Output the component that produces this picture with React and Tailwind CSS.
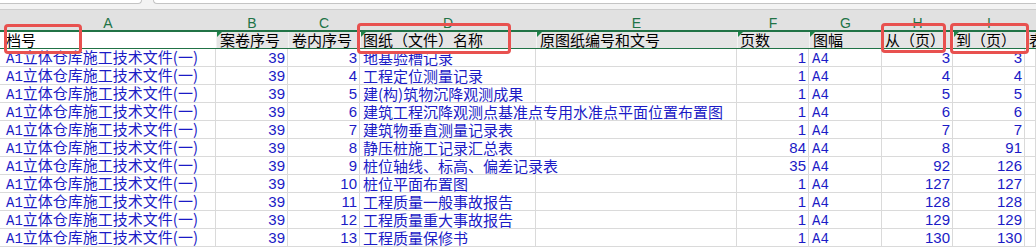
const cn = '"Noto Sans CJK SC", "Liberation Sans", sans-serif';

const letters = ["A", "B", "C", "D", "E", "F", "G", "H", "I", ""];

const headers = [
  { t: "档号", pad: "pl-[6px]", mark: false, active: true },
  { t: "案卷序号", pad: "pl-[3px]", mark: true },
  { t: "卷内序号", pad: "pl-[3px]", mark: false },
  { t: "图纸（文件）名称", pad: "pl-[2px]", mark: true },
  { t: "原图纸编号和文号", pad: "pl-[3px]", mark: true },
  { t: "页数", pad: "pl-[2px]", mark: true },
  { t: "图幅", pad: "pl-[3px]", mark: true },
  { t: "从（页）", pad: "pl-[2px]", mark: false },
  { t: "到（页）", pad: "pl-[2px]", mark: true },
  { t: "表", pad: "pl-[3px]", mark: false },
];

const rows = [
  [3, "地基验槽记录", 1, 3, 3],
  [4, "工程定位测量记录", 1, 4, 4],
  [5, "建(构)筑物沉降观测成果", 1, 5, 5],
  [6, "建筑工程沉降观测点基准点专用水准点平面位置布置图", 1, 6, 6],
  [7, "建筑物垂直测量记录表", 1, 7, 7],
  [8, "静压桩施工记录汇总表", 84, 8, 91],
  [9, "桩位轴线、标高、偏差记录表", 35, 92, 126],
  [10, "桩位平面布置图", 1, 127, 127],
  [11, "工程质量一般事故报告", 1, 128, 128],
  [12, "工程质量重大事故报告", 1, 129, 129],
  [13, "工程质量保修书", 1, 130, 130],
];

const grid =
  "grid grid-cols-[216px_72px_72px_176px_201px_72px_73px_71px_72px_1fr]";

const cell =
  "h-[18px] border-r border-b border-[#dadada] flex items-center whitespace-nowrap text-[15px] leading-[17px] text-[#1b1bc6]";

const mono = { fontFamily: '"Liberation Mono", monospace' };

function Num({ v }) {
  return (
    <div className={`${cell} justify-end pr-[2px]`} style={{ fontFamily: '"Liberation Sans", sans-serif' }}>
      {v}
    </div>
  );
}

function RedBox({ className }) {
  return (
    <div className={`absolute border-[3px] border-[#e8514f] rounded-[4px] pointer-events-none ${className}`} />
  );
}

export default function App() {
  return (
    <div className="relative w-[1036px] h-[248px] overflow-hidden bg-white" style={{ fontFamily: cn }}>
      {/* toolbar bottom edge */}
      <div className="h-[10px] bg-[#f3f3f3] border-b border-[#cdcdcd] flex items-start">
        <div className="w-[142px] h-[4px] bg-white border-b border-r border-[#c4c4c4] rounded-br-[6px]" />
        <div className="ml-[11px] flex-1 h-[4px] bg-white border-b border-l border-[#c4c4c4] rounded-bl-[6px]" />
      </div>

      {/* column letters */}
      <div className={`${grid} h-[22px] bg-[#e1e1e1] border-b-2 border-[#217346]`}>
        {letters.map((l, i) => (
          <div
            key={i}
            className="flex items-center justify-center pt-[3px] text-[14px] text-[#217346]"
            style={{ fontFamily: '"Liberation Sans", sans-serif' }}
          >
            {l}
          </div>
        ))}
      </div>

      {/* field header row (selected) */}
      <div className={`${grid} h-[17px] border-b border-[#217346]`}>
        {headers.map((h, i) => (
          <div
            key={i}
            className={`relative h-[16px] flex items-center whitespace-nowrap text-[15px] leading-[16px] text-black ${h.pad} ${
              h.active ? "bg-white" : "bg-[#e5e5e5] border-l border-[#f2f2f2]"
            }`}
          >
            {h.mark && (
              <span className="absolute top-0 left-0 w-0 h-0 border-t-[5px] border-r-[5px] border-t-[#1e8449] border-r-transparent" />
            )}
            {h.t}
          </div>
        ))}
      </div>

      {/* data rows */}
      {rows.map((r, i) => (
        <div key={i} className={grid}>
          <div className={`${cell} pl-[6px]`}>
            <span>
              <span className="text-[14px]" style={mono}>A1</span>立体仓库施工技术文件(一)
            </span>
          </div>
          <Num v={39} />
          <Num v={r[0]} />
          <div className={`${cell} pl-[3px] ${r[1].length > 12 ? "border-r-0" : ""}`}>{r[1]}</div>
          <div className={cell} />
          <Num v={r[2]} />
          <div className={`${cell} pl-[3px]`}>
            <span>
              <span className="text-[14px]" style={mono}>A4</span>
            </span>
          </div>
          <Num v={r[3]} />
          <Num v={r[4]} />
          <div className={cell} />
        </div>
      ))}

      {/* annotation boxes */}
      <RedBox className="left-[4px] top-[24px] w-[78px] h-[30px]" />
      <RedBox className="left-[357px] top-[23px] w-[154px] h-[31px]" />
      <RedBox className="left-[881px] top-[23px] w-[65px] h-[30px]" />
      <RedBox className="left-[950px] top-[23px] w-[79px] h-[31px]" />
    </div>
  );
}
